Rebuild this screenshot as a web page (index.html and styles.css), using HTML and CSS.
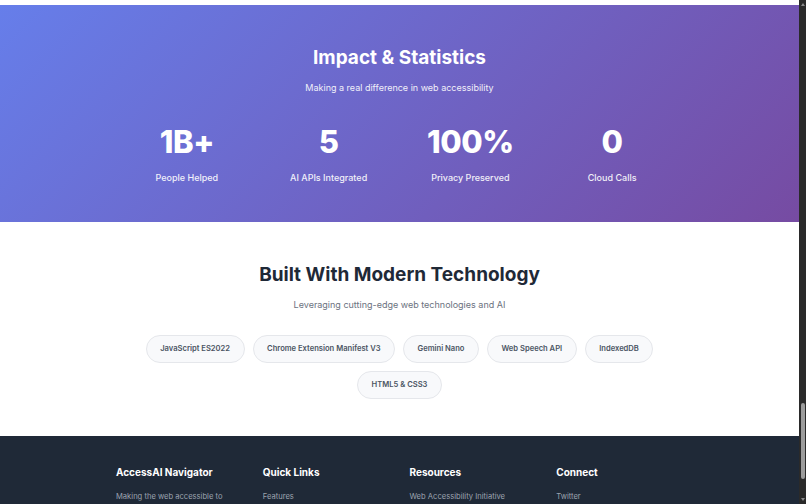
FILE: index.html
```html
<!DOCTYPE html>
<html lang="en">
<head>
    <meta charset="UTF-8">
    <meta name="viewport" content="width=device-width, initial-scale=1.0">
    <title>AccessAI Navigator</title>
    <link rel="stylesheet" href="styles.css">
</head>
<body>
    <div class="page">
        <div class="prev-tail"></div>

        <section class="stats">
            <div class="container">
                <h2>Impact &amp; Statistics</h2>
                <p class="lead">Making a real difference in web accessibility</p>
                <div class="stats-grid">
                    <div class="stat">
                        <div class="stat-number">1B+</div>
                        <div class="stat-label">People Helped</div>
                    </div>
                    <div class="stat">
                        <div class="stat-number">5</div>
                        <div class="stat-label">AI APIs Integrated</div>
                    </div>
                    <div class="stat">
                        <div class="stat-number">100%</div>
                        <div class="stat-label">Privacy Preserved</div>
                    </div>
                    <div class="stat">
                        <div class="stat-number">0</div>
                        <div class="stat-label">Cloud Calls</div>
                    </div>
                </div>
            </div>
        </section>

        <section class="tech">
            <div class="container">
                <h2>Built With Modern Technology</h2>
                <p class="lead">Leveraging cutting-edge web technologies and AI</p>
                <div class="tech-list">
                    <span class="tech-pill">JavaScript ES2022</span>
                    <span class="tech-pill">Chrome Extension Manifest V3</span>
                    <span class="tech-pill">Gemini Nano</span>
                    <span class="tech-pill">Web Speech API</span>
                    <span class="tech-pill">IndexedDB</span>
                    <span class="tech-pill">HTML5 &amp; CSS3</span>
                </div>
            </div>
        </section>

        <footer class="footer">
            <div class="container footer-grid">
                <div class="footer-col">
                    <h4>AccessAI Navigator</h4>
                    <p>Making the web accessible to everyone</p>
                </div>
                <div class="footer-col">
                    <h4>Quick Links</h4>
                    <a href="#">Features</a>
                </div>
                <div class="footer-col">
                    <h4>Resources</h4>
                    <a href="#">Web Accessibility Initiative</a>
                </div>
                <div class="footer-col">
                    <h4>Connect</h4>
                    <a href="#">Twitter</a>
                </div>
            </div>
        </footer>
    </div>

    <div class="scrollbar">
        <span class="arrow up"></span>
        <span class="thumb"></span>
        <span class="arrow down"></span>
    </div>
</body>
</html>
```

FILE: styles.css
```css
:root {
    --grad-start: #667eea;
    --grad-end: #764ba2;
    --heading: #1f2937;
    --muted: #6b7280;
    --pill-bg: #f8f9fb;
    --pill-border: #e5e7eb;
    --pill-text: #4b5563;
    --footer-bg: #1f2937;
    --footer-text: #9ca3af;
}

* {
    box-sizing: border-box;
}

html, body {
    margin: 0;
    height: 100vh;
    overflow: hidden;
}

body {
    display: flex;
    font-family: Inter, "Noto Sans", sans-serif;
    background: #fff;
}

.page {
    flex: 1;
    min-width: 0;
}

.prev-tail {
    height: 5px;
    background: #fff;
}

.container {
    max-width: 567px;
    margin: 0 auto;
}

h2 {
    margin: 0 0 11px;
    font-size: 19px;
    line-height: 24px;
    font-weight: 700;
}

.lead {
    margin: 0;
    font-size: 9px;
    line-height: 14px;
}

/* stats */
.stats {
    background: linear-gradient(135deg, var(--grad-start) 0%, var(--grad-end) 100%);
    color: #fff;
    text-align: center;
    padding: 41px 0 37px;
}

.stats .lead {
    opacity: 0.9;
}

.stats-grid {
    display: grid;
    grid-template-columns: repeat(4, 1fr);
    margin-top: 30px;
}

.stat-number {
    font-size: 31px;
    line-height: 34px;
    font-weight: 800;
    letter-spacing: -0.4px;
}

.stat-label {
    margin-top: 12px;
    font-size: 9px;
    line-height: 14px;
    font-weight: 500;
    opacity: 0.9;
}

/* tech */
.tech {
    text-align: center;
    padding: 41px 0 37px;
}

.tech h2 {
    color: var(--heading);
}

.tech .lead {
    color: var(--muted);
}

.tech-list {
    display: flex;
    flex-wrap: wrap;
    justify-content: center;
    gap: 8px;
    margin-top: 23px;
}

.tech-pill {
    display: inline-block;
    padding: 7px 13.5px;
    font-size: 7.6px;
    line-height: 12px;
    font-weight: 600;
    color: var(--pill-text);
    background: var(--pill-bg);
    border: 1px solid var(--pill-border);
    border-radius: 999px;
    height: 28px;
}

/* footer */
.footer {
    background: var(--footer-bg);
    padding: 28px 0 40px;
}

.footer-grid {
    display: grid;
    grid-template-columns: repeat(4, 1fr);
    gap: 20px;
}

.footer h4 {
    margin: 0 0 10px;
    color: #fff;
    font-size: 10px;
    line-height: 16px;
    font-weight: 700;
}

.footer p,
.footer a {
    display: block;
    margin: 0;
    font-size: 7.6px;
    line-height: 14px;
    color: var(--footer-text);
    text-decoration: none;
}

/* window scrollbar */
.scrollbar {
    width: 7px;
    background: #2a2a2a;
    display: flex;
    flex-direction: column;
    align-items: center;
    padding: 3px 0;
}

.arrow {
    width: 0;
    height: 0;
    border-left: 2.5px solid transparent;
    border-right: 2.5px solid transparent;
}

.arrow.up {
    border-bottom: 3px solid #8a8a8a;
}

.arrow.down {
    border-top: 3px solid #8a8a8a;
    margin-top: 19px;
}

.thumb {
    margin-top: auto;
    width: 4px;
    height: 76px;
    border-radius: 2px;
    background: #9c9c9c;
}
```
